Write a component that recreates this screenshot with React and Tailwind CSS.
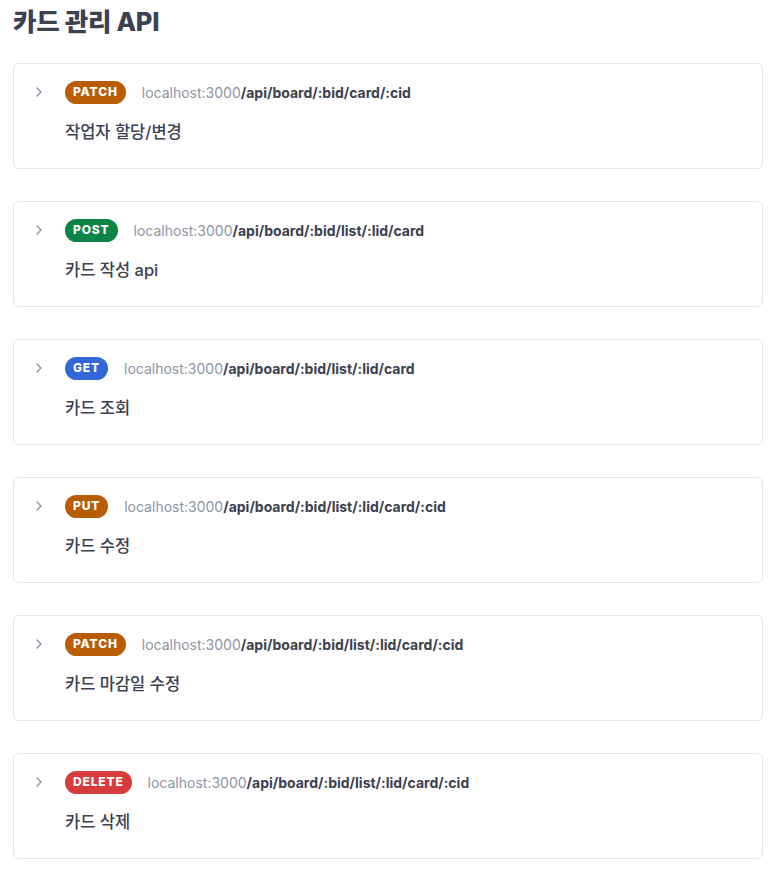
import React from "react";

const endpoints = [
  { method: "PATCH", path: "/api/board/:bid/card/:cid", desc: "작업자 할당/변경" },
  { method: "POST", path: "/api/board/:bid/list/:lid/card", desc: "카드 작성 api" },
  { method: "GET", path: "/api/board/:bid/list/:lid/card", desc: "카드 조회" },
  { method: "PUT", path: "/api/board/:bid/list/:lid/card/:cid", desc: "카드 수정" },
  { method: "PATCH", path: "/api/board/:bid/list/:lid/card/:cid", desc: "카드 마감일 수정" },
  { method: "DELETE", path: "/api/board/:bid/list/:lid/card/:cid", desc: "카드 삭제" },
];

const badgeColors = {
  PATCH: "bg-[#b95c06]",
  POST: "bg-[#0a8545]",
  GET: "bg-[#3366d6]",
  PUT: "bg-[#b95c06]",
  DELETE: "bg-[#d73b3b]",
};

function Chevron() {
  return (
    <svg width="8" height="12" viewBox="0 0 8 12" fill="none" className="shrink-0">
      <path d="M2 2l4 4-4 4" stroke="#8a95a8" strokeWidth="1.4" strokeLinecap="round" strokeLinejoin="round" />
    </svg>
  );
}

function EndpointCard({ method, path, desc }) {
  return (
    <div className="border border-[#e3e6ea] rounded-md bg-white pt-[16px] pb-[25px] pl-[21px] pr-4">
      <div className="flex items-center h-[24px]">
        <Chevron />
        <div className="w-[22px]" />
        <span className={`${badgeColors[method]} text-white text-[12px] font-extrabold tracking-[0.07em] rounded-full h-[23px] px-[8px] flex items-center leading-none`}>
          {method}
        </span>
        <span className="ml-4 text-[14px] whitespace-nowrap">
          <span className="text-[#8b95a5]">localhost:3000</span>
          <span className="font-bold text-[#3b4151]">{path}</span>
        </span>
      </div>
      <div className="mt-[17px] pl-[30px] text-[16.5px] font-medium text-[#3b4151] leading-[22px]">{desc}</div>
    </div>
  );
}

export default function App() {
  return (
    <div className="bg-white min-h-screen px-[13px] pt-[6px] pb-4" style={{ fontFamily: "Inter, 'Noto Sans CJK KR', sans-serif" }}>
      <h1 className="text-[25.5px] font-extrabold text-[#3b4151] leading-[32px] tracking-[-0.01em]">카드 관리 API</h1>
      <div className="mt-[25px] flex flex-col gap-[32px] w-[750px]">
        {endpoints.map((e, i) => (
          <EndpointCard key={i} {...e} />
        ))}
      </div>
    </div>
  );
}
